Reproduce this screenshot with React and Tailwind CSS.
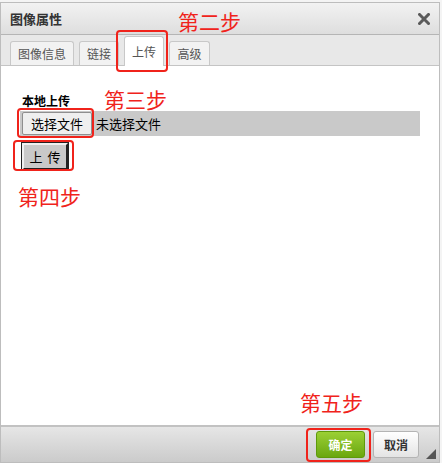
import React from 'react';

const font = { fontFamily: '"Noto Sans CJK SC", "Liberation Sans", sans-serif' };

const Tab = ({ label, active, className = '' }) => (
  <div
    className={`h-[24px] flex items-center justify-center text-[12px] text-[#555] border border-[#c8c8c8] border-b-0 rounded-t-[3px] ${
      active ? 'bg-white h-[30px] text-[#333]' : 'bg-[#f2f2f2]'
    } ${className}`}
  >
    {label}
  </div>
);

const Mark = ({ className }) => (
  <div className={`absolute border-2 border-[#f0231b] rounded-[4px] ${className}`} />
);

const Step = ({ text, className }) => (
  <div className={`absolute text-[21px] leading-none text-[#f0231b] ${className}`}>{text}</div>
);

export default function App() {
  return (
    <div className="relative w-[442px] h-[463px] bg-[#f4f4f4] overflow-hidden" style={font}>
      <div className="absolute inset-0 top-[2px] right-[2px] flex flex-col bg-white border border-[#bdbdbd]">
        {/* title */}
        <div className="h-[32px] shrink-0 flex items-center justify-between pl-[9px] pr-[8px] bg-gradient-to-b from-[#f2f2f2] to-[#dedede] border-b border-[#b5b5b5]">
          <span className="text-[13px] font-bold text-[#333]">图像属性</span>
          <svg width="12" height="12" viewBox="0 0 12 12" className="mr-[1px]">
            <path d="M1.5 1.5 L10.5 10.5 M10.5 1.5 L1.5 10.5" stroke="#5a5a5a" strokeWidth="3" strokeLinecap="square" />
          </svg>
        </div>

        {/* tabs */}
        <div className="h-[31px] shrink-0 flex items-end gap-[5px] pl-[9px] bg-[#e8e8e8] border-b border-[#c4c4c4]">
          <Tab label="图像信息" className="w-[64px]" />
          <Tab label="链接" className="w-[40px]" />
          <Tab label="上传" active className="w-[40px] -mb-px" />
          <Tab label="高级" className="w-[41px]" />
        </div>

        {/* body */}
        <div className="flex-1 px-[19px] pt-[28px]">
          <div className="text-[12px] font-bold text-black leading-[14px] pl-[2px]">本地上传</div>
          <div className="mt-[3px] h-[25px] flex items-center bg-[#c9c9c9]">
            <div className="ml-[2px] h-[23px] px-[8px] flex items-center bg-[#efefef] border border-[#8f8f8f] rounded-[2px] text-[13px] text-black">
              选择文件
            </div>
            <span className="ml-[4px] text-[13px] text-black">未选择文件</span>
          </div>
          <div className="mt-[7px] ml-[2px] w-[46px] h-[27px] flex items-center justify-center gap-[5px] bg-[#c9c9c9] border-2 border-t-[#f0f0f0] border-l-[#f0f0f0] border-r-[#222] border-b-[#222] outline outline-1 outline-[#222] text-[13px] text-black">
            <span>上</span>
            <span>传</span>
          </div>
        </div>

        {/* footer */}
        <div className="h-[37px] shrink-0 relative flex items-center justify-end gap-[8px] pr-[20px] bg-gradient-to-b from-[#e6e6e6] to-[#cbcbcb] border-t-2 border-[#c2c2c2]">
          <div className="w-[49px] h-[27px] flex items-center justify-center rounded-[3px] bg-gradient-to-b from-[#9bd034] to-[#6aa70d] border border-[#5e9a0a] text-[12px] font-bold text-white">
            确定
          </div>
          <div className="w-[46px] h-[27px] flex items-center justify-center rounded-[3px] bg-gradient-to-b from-[#ffffff] to-[#e4e4e4] border border-[#b4b4b4] text-[12px] font-bold text-[#333]">
            取消
          </div>
          <svg width="10" height="10" viewBox="0 0 10 10" className="absolute right-[3px] bottom-[3px]">
            <path d="M10 0 L10 10 L0 10 Z" fill="#555" />
          </svg>
        </div>
      </div>

      {/* annotations */}
      <Mark className="left-[116px] top-[30px] w-[52px] h-[42px]" />
      <Step text="第二步" className="left-[178px] top-[11px]" />
      <Mark className="left-[17px] top-[108px] w-[77px] h-[30px]" />
      <Step text="第三步" className="left-[104px] top-[89px]" />
      <Mark className="left-[13px] top-[140px] w-[61px] h-[31px]" />
      <Step text="第四步" className="left-[18px] top-[186px]" />
      <Mark className="left-[306px] top-[428px] w-[65px] h-[34px]" />
      <Step text="第五步" className="left-[300px] top-[392px]" />
    </div>
  );
}
